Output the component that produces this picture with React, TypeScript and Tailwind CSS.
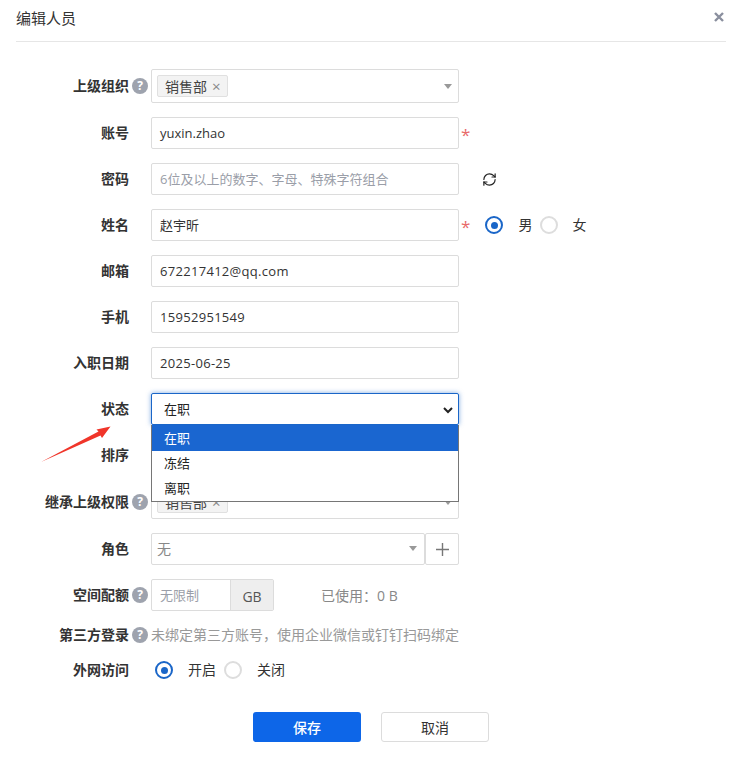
import { RefreshCw } from "lucide-react";
import type { ReactNode } from "react";

const fontStack = {
  fontFamily: '"Open Sans", "Noto Sans CJK SC", sans-serif',
};

function HelpIcon() {
  return (
    <span className="ml-[3px] flex h-4 w-4 items-center justify-center rounded-full bg-[#9ea3ae] text-[12px] font-bold leading-none text-white">
      ?
    </span>
  );
}

function Row({
  label,
  help,
  height = "h-8",
  children,
}: {
  label: string;
  help?: boolean;
  height?: string;
  children: ReactNode;
}) {
  return (
    <div className={`relative flex items-center ${height}`}>
      <div className="w-[129px] shrink-0 text-right text-[14px] font-bold leading-5 text-[#333]">
        {label}
      </div>
      <div className="flex w-[22px] shrink-0 items-center">
        {help && <HelpIcon />}
      </div>
      {children}
    </div>
  );
}

function TextBox({
  value,
  placeholder,
  wide,
}: {
  value?: string;
  placeholder?: string;
  wide?: boolean;
}) {
  return (
    <div
      className={`flex h-8 w-[308px] shrink-0 items-center rounded-[2px] border border-[#dcdcdc] bg-white pl-2 pt-[2px] text-[13px] ${
        placeholder ? "text-[#9a9ea8]" : "text-[#333]"
      } ${wide ? "tracking-[0.3px]" : ""}`}
    >
      {value ?? placeholder}
    </div>
  );
}

function Caret() {
  return (
    <span className="h-0 w-0 border-x-[4.5px] border-t-[5px] border-x-transparent border-t-[#999]" />
  );
}

function Tag() {
  return (
    <span className="flex h-[22px] w-[71px] items-center rounded-[2px] border border-[#e0e0e0] bg-[#f3f3f3] pl-[7px] text-[14px] text-[#444]">
      销售部
      <span className="ml-[5px] text-[15px] leading-none text-[#888]">×</span>
    </span>
  );
}

function OrgSelect() {
  return (
    <div className="flex h-[34px] w-[308px] shrink-0 items-center justify-between rounded-[2px] border border-[#dcdcdc] bg-white pl-[5px] pr-[6px]">
      <Tag />
      <Caret />
    </div>
  );
}

function Required() {
  return <span className="ml-[2px] mt-[3px] text-[17px] leading-none text-[#e86a6a]">*</span>;
}

function Radio({ checked, label, textGap }: { checked?: boolean; label: string; textGap: string }) {
  return (
    <div className="flex items-center">
      {checked ? (
        <span className="flex h-[18px] w-[18px] items-center justify-center rounded-full border-2 border-[#1a66c8]">
          <span className="h-[7px] w-[7px] rounded-full bg-[#1a66c8]" />
        </span>
      ) : (
        <span className="h-[18px] w-[18px] rounded-full border-2 border-[#dddddd]" />
      )}
      <span className={`${textGap} text-[14px] leading-5 text-[#333]`}>{label}</span>
    </div>
  );
}

export default function App() {
  return (
    <div className="relative min-h-[766px] w-[737px] bg-white" style={fontStack}>
      <header className="mx-4 mr-[11px] flex h-[42px] items-start justify-between border-b border-[#e6e6e6]">
        <h1 className="mt-[8px] text-[15px] leading-5 text-[#333]">编辑人员</h1>
        <svg className="mr-[2px] mt-[12px] h-[10px] w-[10px]" viewBox="0 0 10 10">
          <path d="M1 1l8 8M9 1L1 9" stroke="#8a8f9e" strokeWidth="2.4" />
        </svg>
      </header>

      <form className="mt-[27px] flex flex-col gap-[14px]">
        <Row label="上级组织" help height="h-[34px]">
          <OrgSelect />
        </Row>
        <Row label="账号">
          <TextBox value="yuxin.zhao" />
          <Required />
        </Row>
        <Row label="密码">
          <TextBox placeholder="6位及以上的数字、字母、特殊字符组合" />
          <RefreshCw className="ml-[23px] h-[15px] w-[15px] text-[#222]" strokeWidth={1.9} />
        </Row>
        <Row label="姓名">
          <TextBox value="赵宇昕" />
          <Required />
          <div className="ml-[15px] flex items-center gap-2">
            <Radio checked label="男" textGap="ml-[15px]" />
            <Radio label="女" textGap="ml-[14px]" />
          </div>
        </Row>
        <Row label="邮箱">
          <TextBox value="672217412@qq.com" wide />
        </Row>
        <Row label="手机">
          <TextBox value="15952951549" wide />
        </Row>
        <Row label="入职日期">
          <TextBox value="2025-06-25" wide />
        </Row>
        <Row label="状态">
          <div className="flex h-8 w-[308px] shrink-0 items-center justify-between rounded-[2px] border border-[#1a66c8] bg-white pl-3 pr-[5px] pt-[2px] text-[13px] text-[#222] shadow-[0_0_5px_rgba(26,102,200,0.55)]">
            在职
            <svg className="h-[8px] w-[10px]" viewBox="0 0 10 8">
              <path d="M1 2l4 4 4-4" fill="none" stroke="#222" strokeWidth="2" />
            </svg>
          </div>
          <div className="absolute left-[151px] top-8 z-10 flex h-[77px] w-[308px] flex-col border border-t-0 border-[#767676] bg-white text-[13px] text-[#222]">
            <div className="flex h-[26px] items-center bg-[#1a66d0] pl-3 pt-[2px] text-white">在职</div>
            <div className="flex h-[25px] items-center pl-3">冻结</div>
            <div className="flex h-[25px] items-center pl-3">离职</div>
          </div>
        </Row>
        <Row label="排序">
          <TextBox value="" />
        </Row>
        <Row label="继承上级权限" help height="h-[34px]">
          <OrgSelect />
        </Row>
        <Row label="角色">
          <div className="flex h-8 w-[274px] shrink-0 items-center justify-between rounded-[2px] border border-[#dcdcdc] pb-[2px] pl-[5px] pr-[7px] text-[14px] text-[#888]">
            无
            <Caret />
          </div>
          <div className="flex h-8 w-[34px] shrink-0 items-center justify-center rounded-[2px] border border-[#dcdcdc]">
            <svg className="h-[13px] w-[13px]" viewBox="0 0 13 13">
              <path d="M6.5 0v13M0 6.5h13" stroke="#777" strokeWidth="1.4" />
            </svg>
          </div>
        </Row>
        <Row label="空间配额" help>
          <div className="flex h-8 w-[123px] shrink-0 rounded-[2px] border border-[#dcdcdc] text-[13px]">
            <div className="flex w-[78px] items-center pl-2 pt-[2px] text-[#9a9ea8]">无限制</div>
            <div className="flex flex-1 items-center justify-center border-l border-[#dcdcdc] bg-[#eeeeee] pt-[2px] text-[14px] text-[#555]">
              GB
            </div>
          </div>
          <span className="ml-[47px] text-[14px] text-[#888]">已使用：0 B</span>
        </Row>
        <Row label="第三方登录" help height="h-5">
          <span className="text-[14px] leading-5 text-[#999]">未绑定第三方账号，使用企业微信或钉钉扫码绑定</span>
        </Row>
        <Row label="外网访问" height="h-[22px]">
          <div className="ml-1 flex items-center gap-2">
            <Radio checked label="开启" textGap="ml-[15px]" />
            <Radio label="关闭" textGap="ml-[15px]" />
          </div>
        </Row>
      </form>

      <div className="ml-[253px] mt-[31px] flex gap-5 text-[14px]">
        <button type="button" className="h-[30px] w-[108px] rounded-[3px] bg-[#0d66e8] font-medium text-white">
          保存
        </button>
        <button type="button" className="h-[30px] w-[108px] rounded-[3px] border border-[#dcdcdc] bg-white text-[#333]">
          取消
        </button>
      </div>

      <svg className="pointer-events-none absolute left-[40px] top-[424px] z-20 h-[40px] w-[72px]" viewBox="0 0 72 40">
        <path d="M1 38L58.5 7.5 56.5 5.5 70.5 2.5 62 14 60.5 11.5z" fill="#f0352a" />
      </svg>
    </div>
  );
}
